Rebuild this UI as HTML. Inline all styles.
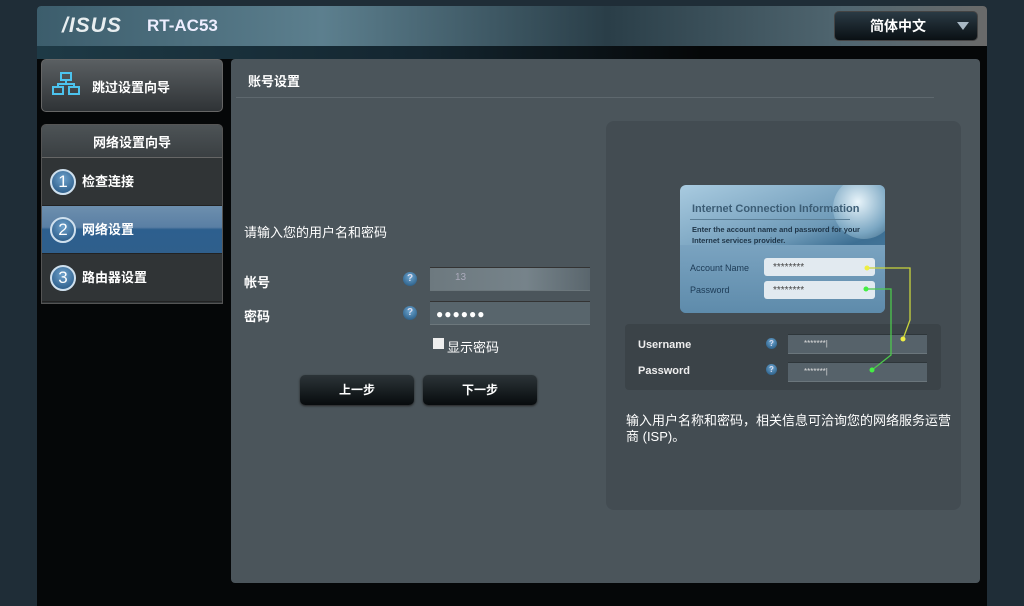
<!DOCTYPE html>
<html><head><meta charset="utf-8"><style>
*{margin:0;padding:0;box-sizing:border-box}
body{width:1024px;height:600px;overflow:hidden;background:#1f2d37;font-family:"Liberation Sans","Noto Sans CJK SC",sans-serif;position:relative;color:#fff}
.frame{position:absolute;left:37px;top:6px;width:950px;height:600px;background:#050708;border-radius:4px 4px 0 0}
.hdr{position:absolute;left:37px;top:6px;width:950px;height:40px;border-radius:4px 4px 0 0;background:linear-gradient(90deg,#3c5d6c 0%,#5c7f8e 30%,#2a3e48 60%,#506670 85%,#6a6a6a 100%)}
.hdr2{position:absolute;left:37px;top:46px;width:950px;height:13px;background:linear-gradient(90deg,#1e3a46,#142630 40%,#050708 70%)}
.logo{position:absolute;left:62px;top:14px;font:italic 900 21px "Liberation Sans",sans-serif;letter-spacing:1px;color:#e8eef0}
.model{position:absolute;left:147px;top:16px;font:bold 17px "Liberation Sans",sans-serif;color:#eef}
.lang{position:absolute;left:834px;top:11px;width:144px;height:30px;border-radius:5px;background:linear-gradient(#2a3a44,#0a1014);border:1px solid #444;font-size:14px;font-weight:bold;text-align:center;line-height:28px;padding-right:16px}
.lang:after{content:"";position:absolute;right:8px;top:10px;border:6px solid transparent;border-top:8px solid #a8b8c4}
.skip{position:absolute;left:41px;top:59px;width:182px;height:53px;border-radius:5px;background:linear-gradient(#5a5f62,#2f3336);border:1px solid #666;font-size:13px;font-weight:bold}
.nav{position:absolute;left:41px;top:124px;width:182px;height:180px;border-radius:5px 5px 0 0;background:#303436;border:1px solid #555;overflow:hidden}
.nav .t{height:33px;background:linear-gradient(#4d5356,#3a3f42);text-align:center;line-height:36px;font-size:13px;font-weight:bold;border-bottom:1px solid #666}
.it{height:48px;position:relative;font-size:13px;font-weight:bold;line-height:48px;padding-left:40px;border-bottom:1px solid #222}
.it.a{background:linear-gradient(#6d8fae 0%,#5a7fa4 45%,#2d5f8e 50%,#2f5f8c 100%)}
.num{position:absolute;left:8px;top:11px;width:26px;height:26px;border-radius:50%;background:radial-gradient(circle at 50% 35%,#6fa2cc,#1f4f7c);border:2px solid #cfe0ee;text-align:center;line-height:22px;font-size:17px;font-weight:normal}
.panel{position:absolute;left:231px;top:59px;width:749px;height:524px;background:#4b555b;border-radius:4px}
.ptitle{position:absolute;left:248px;top:71px;font-size:13px;font-weight:bold}
.pline{position:absolute;left:236px;top:97px;width:698px;height:1px;background:#2a3034;border-bottom:1px solid #5e686e}
.lbl{position:absolute;font-size:13px}
.q{position:absolute;width:14px;height:14px;border-radius:50%;background:radial-gradient(circle at 50% 35%,#6fa8d2,#1d4f78);font:bold 10px sans-serif;text-align:center;line-height:14px;color:#dde}
.inp{position:absolute;left:430px;width:160px;height:24px;background:#58656c;border-top:1px solid #333;border-bottom:1px solid #6c777c}
.btn{position:absolute;top:375px;width:114px;height:30px;border-radius:5px;background:linear-gradient(#2c3438,#070b0d);font-size:12px;font-weight:bold;text-align:center;line-height:30px;box-shadow:0 1px 2px #222}
.rbox{position:absolute;left:606px;top:121px;width:355px;height:389px;background:#434c52;border-radius:8px}
.card{position:absolute;left:680px;top:185px;width:205px;height:128px;border-radius:6px;background:linear-gradient(160deg,#a9cbe0,#6e9ab8 45%,#3d6f93 60%,#5e8bac);overflow:hidden}
.card .g{position:absolute;right:-10px;top:-8px;width:62px;height:62px;border-radius:50%;background:radial-gradient(circle at 40% 40%,#e8f4fa,#7aa6c2 60%,#355f7c)}
.ct{position:absolute;left:692px;top:203px;font-size:11px;color:#3c5d75;font-weight:bold}
.cs{position:absolute;left:692px;top:224px;font-size:7.5px;color:#1e3447;line-height:11px;font-weight:bold}
.cl{position:absolute;left:690px;font-size:9px;color:#1c3a55}
.cf{position:absolute;left:764px;width:111px;height:18px;border-radius:3px;background:#e2eaf0;font-size:10px;color:#444;padding-left:9px;line-height:19px}
.sub{position:absolute;left:625px;top:324px;width:316px;height:66px;background:#3b4348;border-radius:4px}
.sl{position:absolute;left:638px;font-size:11px;font-weight:bold;color:#eee}
.sf{position:absolute;left:788px;width:139px;height:20px;background:#56626a;border-top:1px solid #2e363a;border-bottom:1px solid #6b767c;font-size:8px;padding-left:16px;line-height:18px;color:#ddd}
.desc{position:absolute;left:626px;top:413px;white-space:nowrap;font-size:13px;line-height:16px}
</style></head><body>
<div class="frame"></div>
<div class="hdr"></div><div class="hdr2"></div>
<div class="logo">/ISUS</div><div class="model">RT-AC53</div>
<div class="lang">简体中文</div>
<div class="skip">
<svg style="position:absolute;left:10px;top:12px" width="28" height="24" viewBox="0 0 28 24" fill="none" stroke="#4cc3ee" stroke-width="2"><rect x="9" y="1" width="10" height="7"/><rect x="1" y="15" width="10" height="7"/><rect x="17" y="15" width="10" height="7"/><path d="M14 8v4M6 15v-3h16v3"/></svg>
<span style="position:absolute;left:50px;top:17px">跳过设置向导</span></div>
<div class="nav"><div class="t">网络设置向导</div>
<div class="it"><span class="num">1</span>检查连接</div>
<div class="it a"><span class="num">2</span>网络设置</div>
<div class="it"><span class="num">3</span>路由器设置</div></div>
<div class="panel"></div>
<div class="ptitle">账号设置</div><div class="pline"></div>
<div class="lbl" style="left:244px;top:222px">请输入您的用户名和密码</div>
<div class="lbl" style="left:244px;top:272px;font-weight:bold">帐号</div>
<div class="lbl" style="left:244px;top:306px;font-weight:bold">密码</div>
<div class="q" style="left:403px;top:272px">?</div>
<div class="q" style="left:403px;top:306px">?</div>
<div class="inp" style="top:267px;background:linear-gradient(90deg,#6d797f,#76838a 60%,#5a666d)"><span style="position:absolute;left:25px;top:4px;font-size:10px;color:#aab">13</span></div>
<div class="inp" style="top:301px;font-size:12px;line-height:24px;padding-left:6px;letter-spacing:1px">●●●●●●</div>
<div style="position:absolute;left:433px;top:338px;width:11px;height:11px;background:#eee"></div>
<div class="lbl" style="left:447px;top:337px">显示密码</div>
<div class="btn" style="left:300px">上一步</div>
<div class="btn" style="left:423px">下一步</div>
<div class="rbox"></div>
<div class="card"><div class="g"></div><div style="position:absolute;left:0;top:60px;width:100%;height:68px;background:linear-gradient(#7aa3c0,#5e8bab)"></div></div>
<div class="ct">Internet Connection Information</div>
<div style="position:absolute;left:690px;top:219px;width:160px;height:1px;background:#5b7f97"></div>
<div class="cs">Enter the account name and password for your<br>Internet services provider.</div>
<div class="cl" style="top:263px">Account Name</div>
<div class="cl" style="top:285px">Password</div>
<div class="cf" style="top:258px">********</div>
<div class="cf" style="top:281px">********</div>
<div class="sub"></div>
<div class="sl" style="top:339px">Username</div>
<div class="sl" style="top:365px">Password</div>
<div class="q" style="left:766px;top:338px;width:11px;height:11px;line-height:11px;font-size:8px">?</div>
<div class="q" style="left:766px;top:364px;width:11px;height:11px;line-height:11px;font-size:8px">?</div>
<div class="sf" style="top:334px">*******|</div>
<div class="sf" style="top:362px">*******|</div>
<svg style="position:absolute;left:0;top:0" width="1024" height="600"><g fill="none" stroke-width="1.3"><path d="M867 268H910V320L903 339" stroke="#c8d43c"/><path d="M866 289H891V355L872 370" stroke="#4cc84c"/></g><circle cx="867" cy="268" r="2.5" fill="#ee4"/><circle cx="903" cy="339" r="2.5" fill="#ee4"/><circle cx="866" cy="289" r="2.5" fill="#4e4"/><circle cx="872" cy="370" r="2.5" fill="#4e4"/></svg>
<div class="desc">输入用户名称和密码，相关信息可洽询您的网络服务运营<br>商 (ISP)。</div>
</body></html>
